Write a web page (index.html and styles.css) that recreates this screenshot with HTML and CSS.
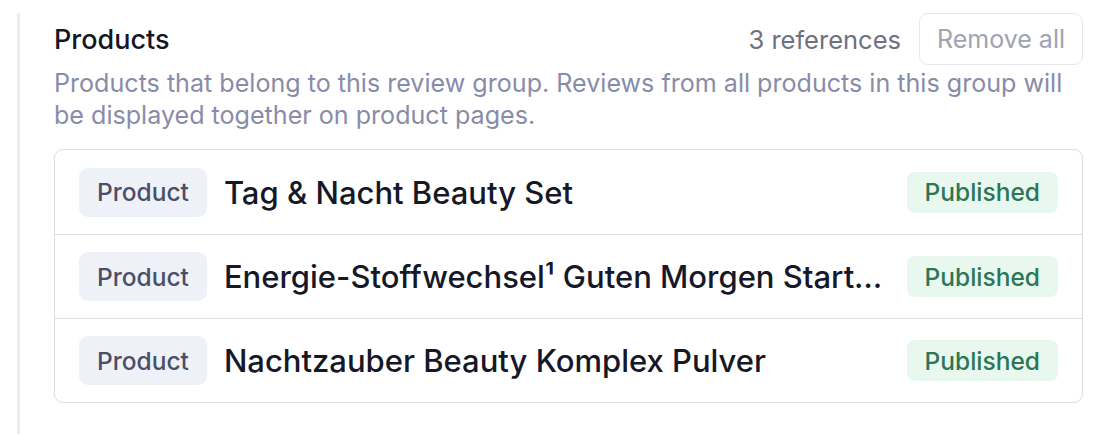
FILE: index.html
```html
<!DOCTYPE html>
<html lang="en">
<head>
<meta charset="utf-8">
<title>Products</title>
<link rel="stylesheet" href="styles.css">
</head>
<body>
<div class="frame">
  <section class="panel">
    <header class="panel-head">
      <h2 class="panel-title">Products</h2>
      <div class="panel-actions">
        <span class="ref-count">3 references</span>
        <button class="btn-remove" type="button">Remove all</button>
      </div>
    </header>
    <p class="panel-desc">Products that belong to this review group. Reviews from all products in this group will be displayed together on product pages.</p>
    <ul class="ref-list">
      <li class="ref-row">
        <span class="type-badge">Product</span>
        <span class="ref-name">Tag &amp; Nacht Beauty Set</span>
        <span class="status-badge">Published</span>
      </li>
      <li class="ref-row">
        <span class="type-badge">Product</span>
        <span class="ref-name">Energie-Stoffwechsel¹ Guten Morgen Starter Set für einen energiereichen Tag</span>
        <span class="status-badge">Published</span>
      </li>
      <li class="ref-row">
        <span class="type-badge">Product</span>
        <span class="ref-name">Nachtzauber Beauty Komplex Pulver</span>
        <span class="status-badge">Published</span>
      </li>
    </ul>
  </section>
</div>
</body>
</html>
```

FILE: styles.css
```css
* { box-sizing: border-box; }

html, body {
  margin: 0;
  padding: 0;
  background: #ffffff;
}

body {
  font-family: Inter, "Noto Sans", "Liberation Sans", sans-serif;
  color: #161827;
}

.frame {
  margin-left: 17px;
  margin-top: 13px;
  border-left: 3px solid #ededf0;
  padding: 0 17px 32px 34px;
  height: 421px;
}

.panel {
  display: flex;
  flex-direction: column;
}

.panel-head {
  display: flex;
  align-items: center;
  justify-content: space-between;
  height: 52px;
}

.panel-title {
  margin: 0;
  font-size: 27px;
  font-weight: 500;
  color: #141624;
}

.panel-actions {
  display: flex;
  align-items: center;
  gap: 18px;
}

.ref-count {
  font-size: 25.5px;
  color: #6e7183;
}

.btn-remove {
  font-family: inherit;
  font-size: 25px;
  color: #a0a3b1;
  background: #ffffff;
  border: 1.5px solid #e6e7eb;
  border-radius: 9px;
  height: 52px;
  padding: 0 17px;
}

.panel-desc {
  margin: 2px 0 0;
  font-size: 25.1px;
  line-height: 32px;
  color: #898ca8;
}

.ref-list {
  list-style: none;
  margin: 18px 0 0;
  padding: 0;
  border: 1.5px solid #dedee2;
  border-radius: 9px;
}

.ref-row {
  display: flex;
  align-items: center;
  gap: 17px;
  padding: 17px 24px 17px 24px;
  height: 84px;
}

.ref-row + .ref-row {
  border-top: 1.5px solid #dedee2;
}

.type-badge {
  flex: none;
  display: flex;
  align-items: center;
  height: 49px;
  padding: 0 18px;
  background: #eef1f8;
  border-radius: 9px;
  font-size: 24.5px;
  font-weight: 500;
  color: #4a4f66;
}

.ref-name {
  flex: 1;
  min-width: 0;
  white-space: nowrap;
  overflow: hidden;
  text-overflow: ellipsis;
  font-size: 31px;
  font-weight: 500;
  color: #161827;
}

.status-badge {
  flex: none;
  display: flex;
  align-items: center;
  height: 41px;
  padding: 0 18px;
  background: #e8f8ef;
  border-radius: 8px;
  font-size: 24.5px;
  font-weight: 500;
  color: #2c7656;
}
```
